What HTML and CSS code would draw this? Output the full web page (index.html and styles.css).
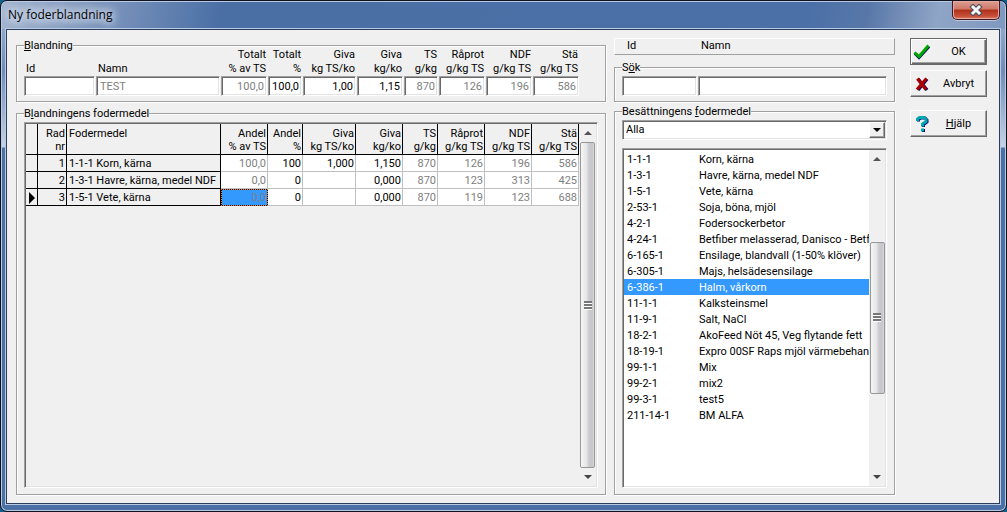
FILE: index.html
```html
<!DOCTYPE html>
<html lang="sv">
<head>
<meta charset="utf-8">
<title>Ny foderblandning</title>
<link rel="stylesheet" href="styles.css">
</head>
<body>
<main class="window">
  <header class="titlebar">
    <h1 class="title">Ny foderblandning</h1>
    <button class="close" type="button" aria-label="Stäng">
      <svg width="14" height="12" viewBox="0 0 14 12"><path d="M4 3 10 9M10 3 4 9" stroke="#4a4f60" stroke-width="5" stroke-linecap="square"/><path d="M4 3 10 9M10 3 4 9" stroke="#f4f4f4" stroke-width="3" stroke-linecap="square"/></svg>
    </button>
  </header>
  <form class="client">
    <div class="left">
      <fieldset class="group mix">
        <legend><u>B</u>landning</legend>
        <div class="fields">
          <label class="field text"><span>Id</span><input type="text"></label>
          <label class="field text"><span>Namn</span><input class="dim" type="text" value="TEST"></label>
          <label class="field"><span>Totalt<br>% av TS</span><input class="dim" type="text" value="100,0"></label>
          <label class="field"><span>Totalt<br>%</span><input type="text" value="100,0"></label>
          <label class="field"><span>Giva<br>kg TS/ko</span><input type="text" value="1,00"></label>
          <label class="field"><span>Giva<br>kg/ko</span><input type="text" value="1,15"></label>
          <label class="field"><span>TS<br>g/kg</span><input class="dim" type="text" value="870"></label>
          <label class="field"><span>Råprot<br>g/kg TS</span><input class="dim" type="text" value="126"></label>
          <label class="field"><span>NDF<br>g/kg TS</span><input class="dim" type="text" value="196"></label>
          <label class="field"><span>Stä<br>g/kg TS</span><input class="dim" type="text" value="586"></label>
        </div>
      </fieldset>
      <fieldset class="group feeds">
        <legend>B<u>l</u>andningens fodermedel</legend>
        <div class="sunken grid-frame">
          <div class="table-area">
            <table class="feed-table">
              <colgroup><col class="c-mark"><col class="c-row"><col><col class="c-47"><col class="c-35"><col class="c-53"><col class="c-47"><col class="c-35"><col class="c-47"><col class="c-47"><col class="c-47"></colgroup>
              <thead>
                <tr><th></th><th>Rad<br>nr</th><th class="name">Fodermedel</th><th>Andel<br>% av TS</th><th>Andel<br>%</th><th>Giva<br>kg TS/ko</th><th>Giva<br>kg/ko</th><th>TS<br>g/kg</th><th>Råprot<br>g/kg TS</th><th>NDF<br>g/kg TS</th><th>Stä<br>g/kg TS</th></tr>
              </thead>
              <tbody>
                <tr><td class="fixed"></td><td class="fixed">1</td><td class="fixed name">1-1-1 Korn, kärna</td><td class="dim">100,0</td><td>100</td><td>1,000</td><td>1,150</td><td class="dim">870</td><td class="dim">126</td><td class="dim">196</td><td class="dim">586</td></tr>
                <tr><td class="fixed"></td><td class="fixed">2</td><td class="fixed name">1-3-1 Havre, kärna, medel NDF</td><td class="dim">0,0</td><td>0</td><td></td><td>0,000</td><td class="dim">870</td><td class="dim">123</td><td class="dim">313</td><td class="dim">425</td></tr>
                <tr><td class="fixed mark"><svg width="6" height="12" viewBox="0 0 6 12"><path d="M0 0 6 6 0 12Z"/></svg></td><td class="fixed">3</td><td class="fixed name">1-5-1 Vete, kärna</td><td class="dim current">0,0</td><td>0</td><td></td><td>0,000</td><td class="dim">870</td><td class="dim">119</td><td class="dim">123</td><td class="dim">688</td></tr>
              </tbody>
            </table>
          </div>
          <div class="scrollbar">
            <svg class="arrow" width="8" height="4" viewBox="0 0 8 4"><path d="M4 0 8 4H0Z" fill="#555"/></svg>
            <div class="thumb"><svg width="8" height="9" viewBox="0 0 8 9" shape-rendering="crispEdges"><path d="M0 0h8v2H0ZM0 3h8v2H0ZM0 6h8v2H0Z" fill="#777"/><path d="M0 2h8v1H0ZM0 5h8v1H0ZM0 8h8v1H0Z" fill="#fff"/></svg></div>
            <svg class="arrow" width="8" height="4" viewBox="0 0 8 4"><path d="M0 0H8L4 4Z" fill="#444"/></svg>
          </div>
        </div>
      </fieldset>
    </div>

    <div class="right">
      <div class="list-head"><span>Id</span><span>Namn</span></div>
      <fieldset class="group search">
        <legend>S<u>ö</u>k</legend>
        <div class="search-row">
          <input type="text" aria-label="Sök Id">
          <input type="text" aria-label="Sök Namn">
        </div>
      </fieldset>
      <fieldset class="group herd">
        <legend>Besättningens <u>f</u>odermedel</legend>
        <div class="select-box">
          <select aria-label="Besättningens fodermedel"><option>Alla</option></select>
          <span class="drop"><svg width="8" height="4" viewBox="0 0 8 4"><path d="M0 0H8L4 4Z"/></svg></span>
        </div>
        <div class="sunken list-frame">
          <ul class="list" role="listbox" aria-label="Fodermedel">
            <li role="option"><span>1-1-1</span><span>Korn, kärna</span></li>
            <li role="option"><span>1-3-1</span><span>Havre, kärna, medel NDF</span></li>
            <li role="option"><span>1-5-1</span><span>Vete, kärna</span></li>
            <li role="option"><span>2-53-1</span><span>Soja, böna, mjöl</span></li>
            <li role="option"><span>4-2-1</span><span>Fodersockerbetor</span></li>
            <li role="option"><span>4-24-1</span><span>Betfiber melasserad, Danisco - Betf</span></li>
            <li role="option"><span>6-165-1</span><span>Ensilage, blandvall (1-50% klöver)</span></li>
            <li role="option"><span>6-305-1</span><span>Majs, helsädesensilage</span></li>
            <li role="option" class="selected" aria-selected="true"><span>6-386-1</span><span>Halm, vårkorn</span></li>
            <li role="option"><span>11-1-1</span><span>Kalksteinsmel</span></li>
            <li role="option"><span>11-9-1</span><span>Salt, NaCl</span></li>
            <li role="option"><span>18-2-1</span><span>AkoFeed Nöt 45, Veg flytande fett</span></li>
            <li role="option"><span>18-19-1</span><span>Expro 00SF Raps mjöl värmebehan</span></li>
            <li role="option"><span>99-1-1</span><span>Mix</span></li>
            <li role="option"><span>99-2-1</span><span>mix2</span></li>
            <li role="option"><span>99-3-1</span><span>test5</span></li>
            <li role="option"><span>211-14-1</span><span>BM ALFA</span></li>
          </ul>
          <div class="scrollbar partial">
            <svg class="arrow" width="8" height="4" viewBox="0 0 8 4"><path d="M4 0 8 4H0Z" fill="#555"/></svg>
            <div class="thumb"><svg width="8" height="9" viewBox="0 0 8 9" shape-rendering="crispEdges"><path d="M0 0h8v2H0ZM0 3h8v2H0ZM0 6h8v2H0Z" fill="#777"/><path d="M0 2h8v1H0ZM0 5h8v1H0ZM0 8h8v1H0Z" fill="#fff"/></svg></div>
            <svg class="arrow" width="8" height="4" viewBox="0 0 8 4"><path d="M0 0H8L4 4Z" fill="#444"/></svg>
          </div>
        </div>
      </fieldset>
    </div>

    <div class="actions">
      <button class="action default" type="button">
        <svg width="18" height="16" viewBox="0 0 18 16"><path d="M2 9.500 6 13.500 16 2.500" fill="none" stroke="#00006a" stroke-width="3"/><path d="M1.500 8.500 6 12.500 15.500 1.500" fill="none" stroke="#00a800" stroke-width="3"/></svg>
        <span>OK</span>
      </button>
      <button class="action" type="button">
        <svg width="18" height="16" viewBox="0 0 18 16"><path d="M5 3 14 14M14 3 5 14" stroke="#00006a" stroke-width="3.500"/><path d="M4.500 2.500 13 13.500M13.500 2.500 4 13.500" stroke="#a80000" stroke-width="3.200"/></svg>
        <span>Avbryt</span>
      </button>
      <button class="action help" type="button">
        <svg width="18" height="16" viewBox="0 0 18 16"><g fill="none" stroke="#000078" stroke-width="3"><path d="M5.500 5.500V3.500L7.500 2H12L14 4V6L10.500 8.500V11M10.500 13V16"/></g><g fill="none" stroke="#00a8b0" stroke-width="3"><path d="M4.500 5V3L6.500 1.500H11L13 3.500V5.500L9.500 8V10.500M9.500 12.500V15.500"/></g></svg>
        <span><u>H</u>jälp</span>
      </button>
    </div>
  </form>
</main>
</body>
</html>
```
FILE: styles.css
```css
* { box-sizing: border-box; }

body {
  margin: 0;
  background: #12608c;
  color: #000;
  font: 11px/14px Roboto, "Liberation Sans", sans-serif;
}

input, select, button { font: inherit; color: inherit; }
svg { display: block; }

/* Window frame */
.window {
  display: flex;
  flex-direction: column;
  min-height: 100vh;
  padding: 0 6px 7px 5px;
  border: 1px solid #10131f;
  border-radius: 7px;
  box-shadow: inset 0 0 0 1px #b9cbe2;
  background:
    linear-gradient(100deg, #a3b5d0 0, #8299bf 90px, #4a6fa5 220px, #4a70a7 80%, #5877a8 86%, #8fa5c6 93%, #7f98c0 100%) 0 0 / 100% 28px no-repeat,
    linear-gradient(#8fa6ca 29px, #6f8dbb 70px, #c5d2e6 146px, #4a70a5 147px);
}

.titlebar {
  display: flex;
  justify-content: space-between;
  align-items: flex-start;
  height: 28px;
}

.title {
  margin: 4px 0 0 2px;
  font: 12px/20px "Open Sans", "Noto Sans", sans-serif;
  text-shadow: 0 0 8px #e4ecf7, 0 0 8px #e4ecf7, 0 0 12px #dfe8f4;
}

.close {
  display: flex;
  align-items: center;
  justify-content: center;
  width: 48px;
  height: 19px;
  padding: 0;
  border: 1px solid #451820;
  border-top: 0;
  border-radius: 0 0 5px 5px;
  box-shadow: inset 0 0 0 1px #e5aaa2, 0 1px 0 #b9cbe2;
  background: linear-gradient(#dba092, #cf7766 45%, #b0301a 50%, #c8513a 85%, #df8065);
}

/* Client area */
.client {
  display: flex;
  flex: 1;
  gap: 8px;
  padding: 8px 12px 8px 9px;
  border: 1px solid #2b3d5a;
  box-shadow: 0 0 0 1px #b9cbe2;
  background: #f0f0f0;
}

.left {
  display: flex;
  flex: 590 1 0;
  flex-direction: column;
  gap: 5px;
  min-width: 0;
  padding-top: 1px;
}

.right {
  display: flex;
  flex: 281 1 0;
  flex-direction: column;
  min-width: 0;
}

.group {
  min-width: 0;
  margin: 0;
  padding: 0 7px 5px;
  border: 1px solid #a0a0a0;
  box-shadow: inset 1px 1px 0 #fff, 1px 1px 0 #fff;
}

legend {
  height: 13px;
  padding: 0;
  background: #f0f0f0;
  line-height: 13px;
}

.feeds, .herd {
  display: flex;
  flex: 1;
  flex-direction: column;
  padding-top: 2px;
  padding-bottom: 6px;
}

.sunken, input, .select-box {
  border: 1px solid;
  border-color: #a0a0a0 #fff #fff #a0a0a0;
  box-shadow: inset 1px 1px 0 #696969, inset -1px -1px 0 #e3e3e3;
}

input {
  width: 100%;
  min-width: 0;
  height: 20px;
  padding: 1px 4px;
  border-radius: 0;
  background: #fff;
  outline: 0;
}

.dim { color: #808080; }

/* Mix totals */
.fields {
  display: grid;
  grid-template-columns: 71px 1fr 46px 34px 53px 46px 34px 46px 46px 46px;
  gap: 1px;
  margin-top: -4px;
  padding-right: 19px;
}

.field {
  display: flex;
  flex-direction: column;
  justify-content: flex-end;
  text-align: right;
  white-space: nowrap;
}

.field span { padding-right: 1px; }
.field input { padding: 1px 2px; text-align: right; }
.text { text-align: left; }
.text span { padding-left: 2px; }
.text input { padding-left: 3px; text-align: left; }

/* Feed table */
.grid-frame, .list-frame {
  display: flex;
  flex: 1;
  min-height: 0;
  padding: 1px;
}

.table-area { flex: 1; min-width: 0; }

.feed-table {
  width: 100%;
  border-collapse: separate;
  border-spacing: 0;
  table-layout: fixed;
}

.c-mark { width: 12px; }
.c-row { width: 29px; }
.c-35 { width: 35px; }
.c-47 { width: 47px; }
.c-53 { width: 53px; }

.feed-table th {
  height: 31px;
  padding: 3px 1px 0;
  border-right: 1px solid #000;
  border-bottom: 1px solid #000;
  font-weight: normal;
  line-height: 13px;
  text-align: right;
  vertical-align: top;
  white-space: nowrap;
}

.feed-table td {
  height: 17px;
  padding: 2px 1px 0;
  border-right: 1px solid #c0c0c0;
  border-bottom: 1px solid #c0c0c0;
  background: #fff;
  text-align: right;
  white-space: nowrap;
}

.feed-table td.fixed {
  border-color: #000;
  background: #f0f0f0;
}

.feed-table .name { padding-left: 2px; text-align: left; }
.feed-table td.mark { padding-left: 3px; }

.feed-table td.current {
  padding-top: 1px;
  border: 1px dotted #f08020;
  background: linear-gradient(#39f, #39f) padding-box, #000 border-box;
}

/* Scrollbars */
.scrollbar {
  display: flex;
  flex-direction: column;
  align-items: center;
  width: 17px;
  background: #f0f0f0;
}

.arrow { margin: 7px 0; }

.thumb {
  display: flex;
  flex: 1;
  align-items: center;
  justify-content: center;
  width: 15px;
  border: 1px solid #979797;
  border-radius: 2px;
  background: linear-gradient(90deg, #f6f6f6, #e4e4e6 45%, #cfcfd3 55%, #c4c4c9 85%, #dcdcde);
}

.partial { width: 16px; }
.partial::before, .partial::after { content: ""; flex: 75; }
.partial .arrow:first-child { order: -1; }
.partial .thumb { flex: 154; }
.partial::after { order: 1; }
.partial .arrow:last-child { order: 2; }

/* Feed list */
.list-head {
  display: grid;
  grid-template-columns: 74px 1fr;
  height: 17px;
  margin-bottom: 6px;
  padding-left: 12px;
  border: 1px solid;
  border-color: #fff #a0a0a0 #a0a0a0 #fff;
}

.search { margin-bottom: 3px; padding-top: 2px; }

.search-row {
  display: grid;
  grid-template-columns: 75px 1fr;
  gap: 1px;
}

.select-box {
  display: flex;
  position: relative;
  height: 20px;
  margin-bottom: 8px;
  padding: 1px;
  background: #fff;
}

select {
  flex: 1;
  padding: 0 18px 0 2px;
  border: 0;
  appearance: none;
  background: transparent;
  outline: 0;
}

.drop {
  display: flex;
  position: absolute;
  top: 1px;
  right: 1px;
  bottom: 1px;
  align-items: center;
  justify-content: center;
  width: 16px;
  border: 1px solid;
  border-color: #fff #696969 #696969 #fff;
  box-shadow: inset -1px -1px 0 #a0a0a0;
  background: #f0f0f0;
  pointer-events: none;
}

.list {
  flex: 1;
  min-width: 0;
  margin: 0;
  padding: 1px 0 0;
  overflow: hidden;
  background: #fff;
  list-style: none;
}

.list li {
  display: grid;
  grid-template-columns: 72px 1fr;
  height: 16px;
  padding-left: 3px;
  line-height: 18px;
  white-space: nowrap;
}

.list .selected { background: #39f; color: #fff; }

/* Dialog buttons */
.actions {
  display: flex;
  flex-direction: column;
  gap: 5px;
  width: 77px;
  margin-left: 7px;
}

.action {
  display: flex;
  align-items: center;
  height: 27px;
  padding: 0 2px;
  border: 1px solid;
  border-color: #fff #696969 #696969 #fff;
  border-radius: 0;
  box-shadow: inset -1px -1px 0 #a0a0a0;
  background: #f0f0f0;
}

.action span { flex: 1; padding-left: 2px; }
.default { border-color: #696969; box-shadow: inset 1px 1px 0 #fff, inset -1px -1px 0 #696969, inset -2px -2px 0 #a0a0a0; }
.help { margin-top: 8px; }
```
